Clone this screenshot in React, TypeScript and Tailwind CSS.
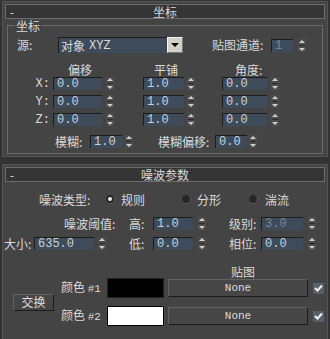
import { type ReactNode } from 'react'

const FIELD =
  "h-[13px] bg-[#3d4b5b] border-t border-l border-[#1c1c1c] text-[#c8d2dc] font-['Liberation_Mono',monospace] text-[12px] pl-[3px] flex items-center"
const RAISED = 'bg-[#464646] border-t border-l border-[#626262] border-r border-b border-r-[#1c1c1c] border-b-[#1c1c1c]'

function Arrows({ className = '' }: { className?: string }) {
  return (
    <div className={`w-[8px] h-[13px] flex flex-col items-center justify-center gap-[2px] bg-[#4c4c4c] ${className}`}>
      <div className="w-0 h-0 border-x-[3px] border-x-transparent border-b-[3px] border-b-[#cfcfcf]" />
      <div className="w-[6px] h-px bg-[#2a2a2a]" />
      <div className="w-0 h-0 border-x-[3px] border-x-transparent border-t-[3px] border-t-[#cfcfcf]" />
    </div>
  )
}

function Spinner({ w, value, gap = 'ml-[4px]', dim }: { w: string; value: string; gap?: string; dim?: boolean }) {
  return (
    <>
      <div className={`${FIELD} ${w} ${dim ? '!text-[#77889a]' : ''}`}>{value}</div>
      <Arrows className={gap} />
    </>
  )
}

function Header({ title }: { title: string }) {
  return (
    <div className="mx-[2px] h-[15px] border border-[#6c6c6c] bg-[#353535] flex items-center">
      <span className="w-[24px] pl-[4px]">-</span>
      <span className="flex-1 text-center">{title}</span>
      <span className="w-[24px]" />
    </div>
  )
}

function Radio({ on, className = '' }: { on?: boolean; className?: string }) {
  return (
    <div className={`w-[9px] h-[9px] rounded-full bg-[#262626] border-r border-b border-[#5a5a5a] flex items-center justify-center ${className}`}>
      {on && <div className="w-[4px] h-[4px] rounded-full bg-[#f0f0f0]" />}
    </div>
  )
}

function Check() {
  return (
    <div className="ml-[5px] w-[11px] h-[11px] bg-[#57616c] flex items-center justify-center">
      <svg width="9" height="8" viewBox="0 0 9 8">
        <path d="M1 4 L3.5 6.5 L8 1.5" stroke="#f4f4f4" strokeWidth="2" fill="none" />
      </svg>
    </div>
  )
}

function Row({ className = '', children }: { className?: string; children: ReactNode }) {
  return <div className={`flex items-center ${className}`}>{children}</div>
}

function XyzRow({ axis, v1, v2, v3, className = '' }: { axis: string; v1: string; v2: string; v3: string; className?: string }) {
  return (
    <Row className={`h-[13px] ${className}`}>
      <span className="w-[42px] text-right font-['Liberation_Mono',monospace]">{axis}:</span>
      <div className="ml-[3px] flex items-center">
        <Spinner w="w-[49px]" value={v1} />
      </div>
      <div className="ml-[29px] flex items-center">
        <Spinner w="w-[41px]" value={v2} gap="ml-[3px]" />
      </div>
      <div className="ml-[27px] flex items-center">
        <Spinner w="w-[45px]" value={v3} />
      </div>
    </Row>
  )
}

export default function App() {
  return (
    <div className="w-[330px] h-[339px] bg-[#333] pt-[1px] text-[#dadada] text-[12px] leading-none overflow-hidden font-['Noto_Sans_CJK_SC',sans-serif]">
      {/* Coordinates rollout */}
      <div className="mx-[2px] h-[156px] bg-[#444] border border-[#555] pt-[2px]">
        <Header title="坐标" />
        <div className="relative mt-[6px] ml-[4px] w-[316px] h-[129px] border border-[#6a6a6a] pt-[11px]">
          <span className="absolute -top-[6px] left-[7px] px-[1px] bg-[#444]">坐标</span>
          <Row className="h-[16px]">
            <span className="w-[50px] pl-[9px]">源:</span>
            <div className="w-[109px] h-[16px] bg-[#3d4b5b] border-t border-l border-[#1c1c1c] pl-[2px] flex items-center">
              对象 <span className="ml-[4px] font-['Liberation_Mono',monospace]">XYZ</span>
            </div>
            <div className="w-[16px] h-[16px] bg-[#d4d0c8] border border-[#f4f4f4] border-r-[#777] border-b-[#777] flex items-center justify-center">
              <div className="w-0 h-0 border-x-[4px] border-x-transparent border-t-[4px] border-t-black" />
            </div>
            <span className="ml-[29px] w-[59px]">贴图通道:</span>
            <Spinner w="w-[22px]" value="1" gap="ml-[5px]" dim />
          </Row>
          <Row className="mt-[10px] h-[13px]">
            <span className="ml-[60px]">偏移</span>
            <span className="ml-[62px]">平铺</span>
            <span className="ml-[57px]">角度:</span>
          </Row>
          <XyzRow axis="X" v1="0.0" v2="1.0" v3="0.0" className="mt-[1px]" />
          <XyzRow axis="Y" v1="0.0" v2="1.0" v3="0.0" className="mt-[5px]" />
          <XyzRow axis="Z" v1="0.0" v2="1.0" v3="0.0" className="mt-[5px]" />
          <Row className="mt-[9px] h-[13px]">
            <span className="ml-[47px] w-[35px]">模糊:</span>
            <Spinner w="w-[32px]" value="1.0" gap="ml-[3px]" />
            <span className="ml-[25px] w-[57px]">模糊偏移:</span>
            <Spinner w="w-[32px]" value="0.0" gap="ml-[2px]" />
          </Row>
        </div>
      </div>

      {/* Noise parameters rollout */}
      <div className="mt-[7px] mx-[2px] h-[200px] bg-[#444] border border-[#555] pt-[2px]">
        <Header title="噪波参数" />
        <Row className="mt-[11px] h-[13px]">
          <span className="ml-[36px] w-[67px]">噪波类型:</span>
          <Radio on />
          <span className="ml-[6px]">规则</span>
          <Radio className="ml-[37px]" />
          <span className="ml-[6px]">分形</span>
          <Radio className="ml-[28px]" />
          <span className="ml-[7px]">湍流</span>
        </Row>
        <Row className="mt-[11px] h-[13px]">
          <span className="ml-[61px] w-[65px]">噪波阈值:</span>
          <span className="w-[24px]">高:</span>
          <Spinner w="w-[40px]" value="1.0" gap="ml-[5px]" />
          <span className="ml-[23px] w-[32px]">级别:</span>
          <Spinner w="w-[42px]" value="3.0" gap="ml-[5px]" dim />
        </Row>
        <Row className="mt-[7px] h-[13px]">
          <span className="ml-[1px] w-[30px]">大小:</span>
          <Spinner w="w-[60px]" value="635.0" />
          <span className="ml-[23px] w-[24px]">低:</span>
          <Spinner w="w-[40px]" value="0.0" gap="ml-[5px]" />
          <span className="ml-[23px] w-[32px]">相位:</span>
          <Spinner w="w-[42px]" value="0.0" gap="ml-[5px]" />
        </Row>
        <div className="mt-[16px] h-[12px] pl-[228px]">贴图</div>
        <Row>
          <div className={`ml-[10px] w-[41px] h-[17px] ${RAISED} flex items-center justify-center`}>交换</div>
          <div className="flex flex-col gap-[8px]">
            <Row className="h-[20px]">
              <span className="ml-[7px] w-[46px]">
                颜色 <span className="font-['Liberation_Mono',monospace] text-[11px]">#1</span>
              </span>
              <div className="w-[57px] h-[20px] bg-black border border-[#222]" />
              <div className={`ml-[4px] w-[140px] h-[18px] ${RAISED} flex items-center justify-center font-['Liberation_Mono',monospace] text-[11px]`}>
                None
              </div>
              <Check />
            </Row>
            <Row className="h-[20px]">
              <span className="ml-[7px] w-[46px]">
                颜色 <span className="font-['Liberation_Mono',monospace] text-[11px]">#2</span>
              </span>
              <div className="w-[57px] h-[20px] bg-white border border-black" />
              <div className={`ml-[4px] w-[140px] h-[18px] ${RAISED} flex items-center justify-center font-['Liberation_Mono',monospace] text-[11px]`}>
                None
              </div>
              <Check />
            </Row>
          </div>
        </Row>
      </div>
    </div>
  )
}
